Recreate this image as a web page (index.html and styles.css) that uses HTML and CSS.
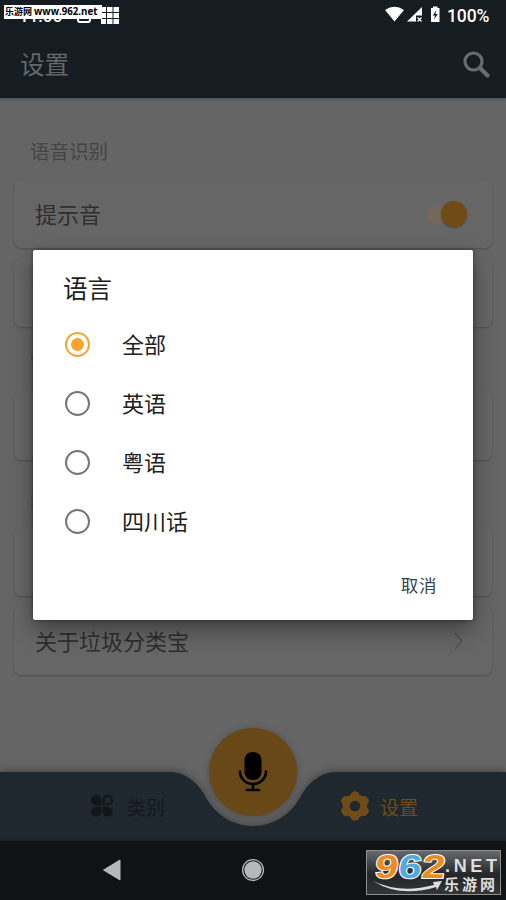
FILE: index.html
```html
<!DOCTYPE html>
<html lang="zh-CN">
<head>
<meta charset="utf-8">
<title>设置</title>
<link rel="stylesheet" href="styles.css">
</head>
<body>
<div class="phone">
  <header class="top">
    <div class="status">
      <span class="clock">11:06</span>
      <svg class="note" width="14" height="14" viewBox="0 0 14 14"><rect x="1" y="1" width="12" height="12" rx="2" fill="none" stroke="#fff" stroke-width="2"/></svg>
      <svg class="grid" width="18" height="17" viewBox="0 0 18 17"><path fill="#fff" d="M0 0h5v5H0zM6 0h5.500v5H6zM12.500 0H18v5h-5.500zM0 6h5v5H0zM6 6h5.500v5H6zM12.500 6H18v5h-5.500zM0 12h5v5H0zM6 12h5.500v5H6zM12.500 12H18v5h-5.500z"/></svg>
      <svg class="signals" width="58" height="18" viewBox="0 0 58 18" fill="#fff">
        <path d="M0 4Q9.500-2.500 19 4L9.500 15.500z"/>
        <path d="M22 15.500L37 1v8.500h-6v6z"/><path d="M32.500 11.500l4 4m0-4l-4 4" stroke="#fff" stroke-width="1.300"/>
        <path d="M46 2h2V.5h4.500V2h2v14H46z"/><path d="M51.500 4l-3.800 5.500h2.400L49 13.500l3.800-5.500h-2.400z" fill="#161d22"/>
      </svg>
      <span class="percent">100%</span>
    </div>
    <div class="bar">
      <h1>设置</h1>
      <svg width="27" height="27" viewBox="0 0 27 27" fill="none" stroke="#696c6e"><circle cx="10.500" cy="10.500" r="8.500" stroke-width="3.200"/><path d="M17 17l7.500 7.500" stroke-width="4.200" stroke-linecap="round"/></svg>
    </div>
  </header>

  <main class="content">
    <h2>语音识别</h2>
    <section class="card"><span>提示音</span><i class="switch"></i></section>
    <section class="card"></section>
    <h2>常规</h2>
    <section class="card"></section>
    <h2>关于</h2>
    <section class="card"></section>
    <section class="card"><span>关于垃圾分类宝</span><svg class="chevron" width="10" height="18" viewBox="0 0 10 18"><path d="M1 1l7 8-7 8" fill="none" stroke="#505050" stroke-width="1.200"/></svg></section>
  </main>

  <nav class="tabs">
    <svg class="tabs-shape" width="506" height="69" viewBox="0 0 506 69"><path fill="#1f282f" d="M0 0H170C184 0 196 9 204 22C214 42 232 54 253 54S292 42 302 22C310 9 322 0 336 0H506V69H0z"/></svg>
    <div class="tab tab-category">
      <svg width="22" height="22" viewBox="0 0 22 22" fill="#101719"><path d="M5 0a5 5 0 0 1 5.300 5v5.300H5A5 5 0 0 1 5 0zM5 11.700h5.300V17A5 5 0 1 1 5 11.700zM11.700 11.700H17A5 5 0 1 1 11.700 17z"/><path d="M12.700 9.300V5a4.200 4.200 0 1 1 4.300 4.300z" fill="none" stroke="#101719" stroke-width="2"/></svg>
      <span>类别</span>
    </div>
    <div class="tab tab-settings">
      <svg width="30" height="30" viewBox="0 0 30 30"><path fill="#704c17" fill-rule="evenodd" d="M12 1.200Q15-.5 18 1.200L19.800 4Q21 5 22.500 5L26 5.300Q28.500 7.300 29 10.500L27.300 13.500Q26.700 15 27.300 16.500L29 19.500Q28.500 22.700 26 24.700L22.500 25Q21 25 19.800 26L18 28.800Q15 30.500 12 28.800L10.200 26Q9 25 7.500 25L4 24.700Q1.500 22.700 1 19.500L2.700 16.500Q3.300 15 2.700 13.500L1 10.500Q1.500 7.300 4 5.300L7.500 5Q9 5 10.200 4zM15 9.700a5.300 5.300 0 1 0 0 10.600 5.300 5.300 0 0 0 0-10.600z"/></svg>
      <span>设置</span>
    </div>
    <div class="fab">
      <svg width="30" height="42" viewBox="0 0 30 42"><rect x="6.500" y="1" width="17" height="28" rx="8"/><path d="M2 20.500a13 12.500 0 0 0 26 0M15 33v6M9 39h12" fill="none" stroke="#000" stroke-width="2.600" stroke-linecap="round"/></svg>
    </div>
  </nav>

  <footer class="system">
    <svg class="back" width="20" height="22" viewBox="0 0 20 22"><path d="M18 1v20L1.500 11z" fill="#b6b8b9" stroke="#b6b8b9" stroke-linejoin="round"/></svg>
    <svg class="home" width="24" height="24" viewBox="0 0 24 24"><circle cx="12" cy="12" r="10.400" fill="none" stroke="#b6b8b9" stroke-width="1.300"/><circle cx="12" cy="12" r="8.700" fill="#b6b8b9"/></svg>
  </footer>

  <div class="dialog">
    <h3>语言</h3>
    <ul>
      <li><i class="radio on"></i><span>全部</span></li>
      <li><i class="radio"></i><span>英语</span></li>
      <li><i class="radio"></i><span>粤语</span></li>
      <li><i class="radio"></i><span>四川话</span></li>
    </ul>
    <div class="cancel">取消</div>
  </div>

  <div class="site-tag">乐游网 <b>www.962.net</b></div>

  <div class="watermark">
    <svg width="135" height="45" viewBox="0 0 135 45">
      <g class="digits" transform="translate(8 27.500) skewX(-7)"><text class="orange" textLength="23" lengthAdjust="spacingAndGlyphs">9</text><text class="blue" x="23.500" textLength="23" lengthAdjust="spacingAndGlyphs">6</text><text class="orange" x="47" textLength="23" lengthAdjust="spacingAndGlyphs">2</text></g>
      <path d="M7 31Q34 44 68 35L67 32l9-1-5 9-1-3Q34 48 7 31z" fill="#dedede"/>
      <text class="net" x="79" y="22" textLength="52">.NET</text>
      <text class="cn" x="78" y="39.500" textLength="51">乐游网</text>
    </svg>
  </div>
</div>
</body>
</html>
```
FILE: styles.css
```css
* { box-sizing: border-box; }
body { margin: 0; font-family: "Noto Sans CJK SC", sans-serif; font-weight: 400; }
h1, h2, h3, ul { margin: 0; padding: 0; font-weight: 400; }
ul { list-style: none; }
svg { display: block; flex: none; }

.phone { position: relative; width: 506px; height: 900px; overflow: hidden; display: flex; flex-direction: column; background: #656565; }

.top { height: 98px; background: #161d22; box-shadow: 0 1px 2px #484b4d; }
.status { height: 31px; display: flex; align-items: center; padding: 0 17px 0 19px; color: #fff; font: 500 17px Roboto, sans-serif; }
.clock { width: 43px; }
.note { margin-left: 15px; }
.grid { margin-left: 10px; margin-right: auto; }
.signals { margin-top: -1px; }
.percent { margin-left: 4px; width: 42px; white-space: nowrap; font-size: 17.5px; letter-spacing: -0.1px; }
.bar { height: 65px; display: flex; align-items: center; justify-content: space-between; padding: 0 16px 0 20px; color: #64686a; }
.bar h1 { font-size: 24.5px; font-weight: 400; line-height: 36px; }
.bar svg { margin-top: 1px; }

.content { flex: 1; padding: 26px 14px 0; }
.content h2 { height: 56px; padding: 12px 0 0 16px; font-size: 19.5px; font-weight: 400; line-height: 30px; color: #444; }
.card { height: 68px; margin-bottom: 11px; padding: 0 28px 0 21px; display: flex; align-items: center; justify-content: space-between; border-radius: 7px; background: #666; box-shadow: 0 1px 2px rgba(0,0,0,.22); font-size: 22px; color: #2e2e2e; }
.card span { padding-bottom: 3px; }
.card + h2 { height: 65px; margin-top: -11px; padding-top: 19px; }
.card ~ .card + h2 { height: 65px; }
.card:nth-of-type(3) + h2 { height: 68px; padding-top: 22px; }
.switch { width: 38px; height: 17px; margin-right: -1px; border-radius: 9px; background: #75685b; display: flex; align-items: center; justify-content: flex-end; }
.switch::after { content: ""; width: 26px; height: 26px; border-radius: 50%; background: #6e4b17; flex: none; margin-right: -2px; box-shadow: 0 1px 2px rgba(0,0,0,.3); }

.tabs { position: relative; height: 69px; display: flex; align-items: center; font-size: 19px; }
.tabs-shape { position: absolute; inset: 0; filter: drop-shadow(0 -1px 5px rgba(0,0,0,.35)); }
.tab { position: relative; display: flex; align-items: center; }
.tab-category { margin-left: 91px; gap: 14px; color: #12191d; }
.tab-settings { margin-left: 175px; gap: 10px; color: #704c17; }
.tab svg { margin-top: -1px; }
.fab { position: absolute; left: 209px; top: -44px; width: 88px; height: 88px; border-radius: 50%; background: #684816; display: flex; align-items: center; justify-content: center; box-shadow: 0 1px 7px rgba(0,0,0,.25); }

.system { position: relative; height: 59px; background: #0f1316; display: flex; align-items: center; padding-bottom: 1px; box-shadow: 0 0 3px #0f1316; }
.back { margin-left: 102px; }
.home { margin-left: 119px; }

.dialog { position: absolute; left: 33px; top: 250px; width: 440.4px; height: 370.4px; padding: 19px 30px 0; border-radius: 2px; background: #fff; box-shadow: 0 10px 22px rgba(0,0,0,.38), 0 0 4px rgba(0,0,0,.4); color: #202020; }
.dialog h3 { height: 46px; font-size: 24.5px; line-height: 38px; }
.dialog li { height: 59px; display: flex; align-items: center; font-size: 22px; }
.dialog li span { padding-bottom: 4px; }
.radio { width: 25px; height: 25px; margin: 0 32px 0 2px; border: 2.5px solid #757575; border-radius: 50%; }
.radio.on { border-color: #f0a638; background: radial-gradient(circle, #f9a52b 0 6px, #fff 6.8px); }
.cancel { margin: 20px 6px 0 0; text-align: right; font-size: 17.5px; line-height: 28px; letter-spacing: .8px; color: #33424c; }

.site-tag { position: absolute; left: 4px; top: 5px; width: 98px; height: 14px; padding-left: 1px; background: #fff; color: #000; font: 700 9px/14px "Noto Sans CJK SC", sans-serif; white-space: nowrap; }
.site-tag b { font: 700 9.7px "Open Sans", sans-serif; }

.watermark { position: absolute; left: 366px; top: 850px; width: 135px; height: 45px; border: 1px solid #8e8e8e; background: linear-gradient(#68696a, #242526 55%, #343536); }
.watermark svg { margin: -1px; }
.digits text { font: 700 33px "Liberation Sans", sans-serif; stroke: #fff; stroke-width: 2px; paint-order: stroke; }
.orange { fill: #ee8b20; }
.blue { fill: #54a9dd; }
.net { font: 700 18px "Liberation Sans", sans-serif; fill: #ddd; }
.cn { font: 700 15px "Noto Sans CJK SC", sans-serif; fill: #ddd; }
```
